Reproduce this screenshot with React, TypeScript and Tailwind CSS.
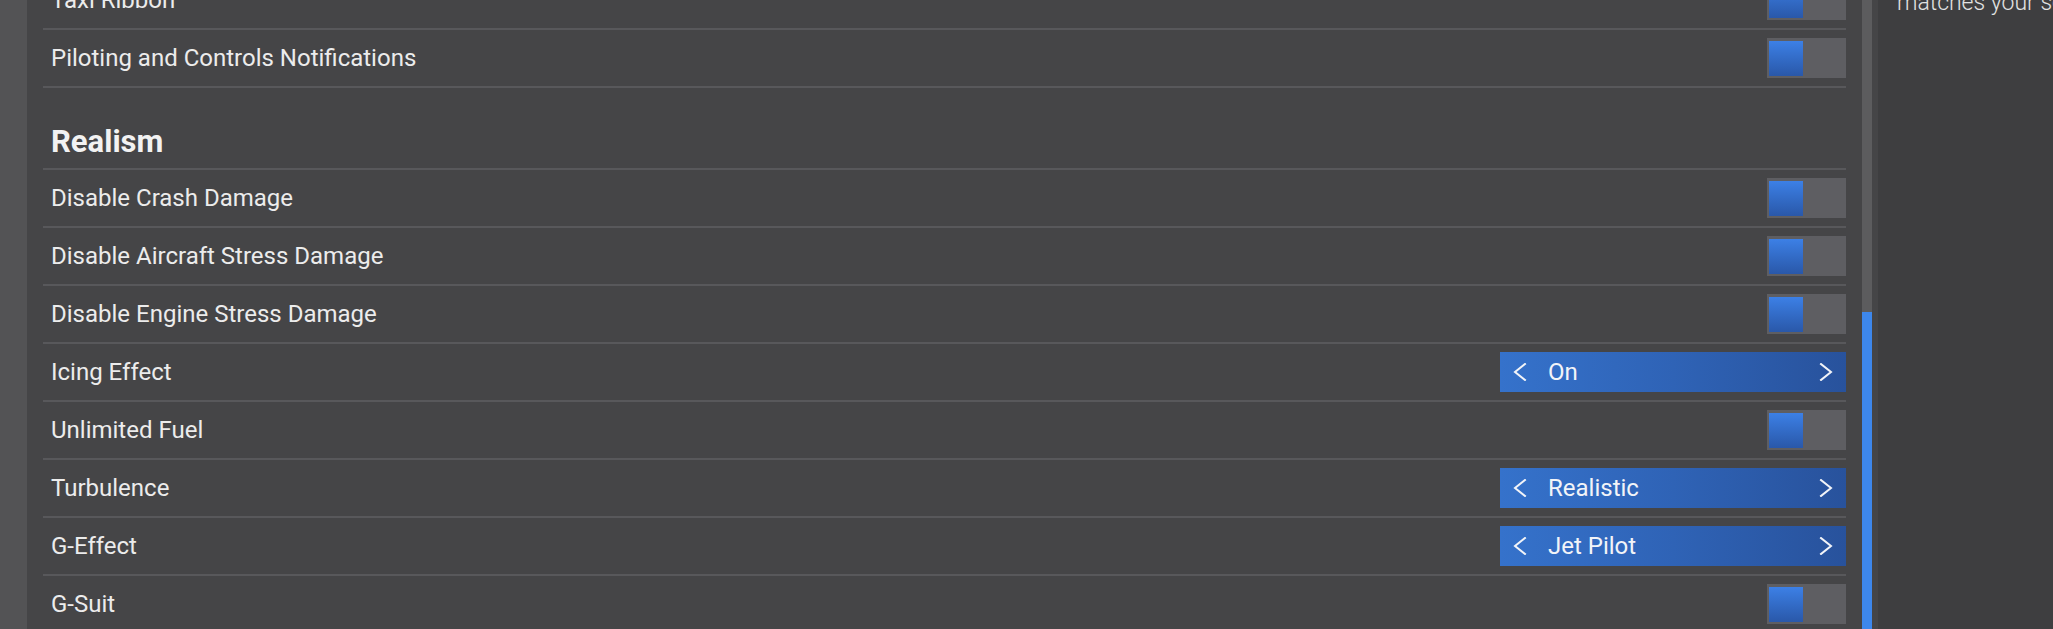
import React from "react";

type Row =
  | { kind: "toggle"; label: string }
  | { kind: "select"; label: string; value: string };

const topRows: Row[] = [
  { kind: "toggle", label: "Taxi Ribbon" },
  { kind: "toggle", label: "Piloting and Controls Notifications" }
];

const realismRows: Row[] = [
  { kind: "toggle", label: "Disable Crash Damage" },
  { kind: "toggle", label: "Disable Aircraft Stress Damage" },
  { kind: "toggle", label: "Disable Engine Stress Damage" },
  { kind: "select", label: "Icing Effect", value: "On" },
  { kind: "toggle", label: "Unlimited Fuel" },
  { kind: "select", label: "Turbulence", value: "Realistic" },
  { kind: "select", label: "G-Effect", value: "Jet Pilot" },
  { kind: "toggle", label: "G-Suit" }
];

function Chevron({ dir }: { dir: "left" | "right" }) {
  return (
    <svg width="14" height="18" viewBox="0 0 14 18" fill="none" className="shrink-0">
      <polyline
        points={dir === "left" ? "12,1 2,9 12,17" : "2,1 12,9 2,17"}
        stroke="#f2f4f8"
        strokeWidth="2"
        strokeLinejoin="miter"
        strokeLinecap="square"
      />
    </svg>
  );
}

function Toggle() {
  return (
    <div className="flex h-[40px] w-[79px] items-center bg-[#5e5e62] px-[2px] py-[3px]">
      <div className="h-[35px] w-[34px] bg-gradient-to-b from-[#3c80e6] to-[#2a58a9]" />
    </div>
  );
}

function Selector({ value }: { value: string }) {
  return (
    <div className="flex h-[40px] w-[346px] items-center bg-gradient-to-r from-[#3572cb] via-[#2f63b6] to-[#28529c] pl-[13px] pr-[13px]">
      <Chevron dir="left" />
      <span className="ml-[21px] flex-1 text-[24px] leading-none text-[#f2f4f8]">{value}</span>
      <Chevron dir="right" />
    </div>
  );
}

function SettingRow({ row }: { row: Row }) {
  return (
    <div className="flex h-[58px] items-center justify-between border-b-2 border-[#58585b] pl-[8px]">
      <span className="text-[24px] leading-none text-[#ececec]">{row.label}</span>
      {row.kind === "toggle" ? <Toggle /> : <Selector value={row.value} />}
    </div>
  );
}

export default function App() {
  return (
    <div
      className="flex h-[629px] w-[2053px] overflow-hidden bg-[#454547]"
      style={{ fontFamily: "Roboto, 'Noto Sans', sans-serif" }}
    >
      <div className="w-[27px] shrink-0 bg-[#535355]" />

      <div className="flex w-[1851px] shrink-0 bg-[#454547] pl-[16px]">
        <div className="-mt-[28px] w-[1803px] shrink-0">
          {topRows.map((row) => (
            <SettingRow key={row.label} row={row} />
          ))}
          <div className="h-[82px] border-b-2 border-[#58585b] pl-[8px] pt-[36px]">
            <h2 className="text-[31px] font-bold leading-[36px] text-[#f2f2f2]">Realism</h2>
          </div>
          {realismRows.map((row) => (
            <SettingRow key={row.label} row={row} />
          ))}
        </div>

        <div className="ml-[16px] flex w-[10px] shrink-0 flex-col bg-[#5c5c5e]">
          <div className="h-[312px]" />
          <div className="flex-1 bg-[#3d87ec]" />
        </div>
        <div className="w-[6px] shrink-0" />
      </div>

      <div className="flex-1 overflow-hidden bg-[#3e3e40] pl-[19px]">
        <p className="-mt-[10px] whitespace-nowrap text-[23px] font-light leading-[26px] text-[#e2e2e2]">
          matches your settings
        </p>
      </div>
    </div>
  );
}
